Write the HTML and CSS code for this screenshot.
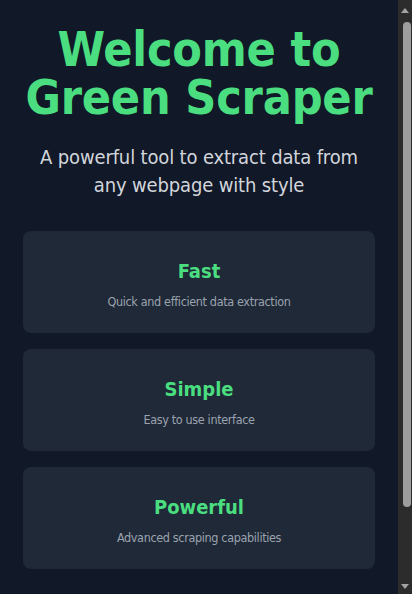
FILE: index.html
```html
<!DOCTYPE html>
<html lang="en">
<head>
<meta charset="utf-8">
<title>Green Scraper</title>
<link rel="stylesheet" href="styles.css">
</head>
<body>
<main class="page">
  <header class="hero">
    <h1 class="title">Welcome to Green Scraper</h1>
    <p class="subtitle">A powerful tool to extract data from any webpage with style</p>
  </header>
  <section class="features">
    <div class="card">
      <h3 class="card-title">Fast</h3>
      <p class="card-text">Quick and efficient data extraction</p>
    </div>
    <div class="card">
      <h3 class="card-title">Simple</h3>
      <p class="card-text">Easy to use interface</p>
    </div>
    <div class="card">
      <h3 class="card-title">Powerful</h3>
      <p class="card-text">Advanced scraping capabilities</p>
    </div>
  </section>
</main>
<div class="scrollbar" aria-hidden="true">
  <span class="arrow-up"></span>
  <span class="thumb"></span>
  <span class="arrow-down"></span>
</div>
</body>
</html>
```
FILE: styles.css
```css
html, body {
  margin: 0;
  padding: 0;
  background: #111827;
}
body {
  font-family: "DejaVu Sans Condensed", "DejaVu Sans", sans-serif;
  padding-right: 14px;
}
.page {
  max-width: 352px;
  margin: 0 auto;
  padding: 25px 0 64px;
}
.hero {
  text-align: center;
}
.title {
  margin: 0;
  font-size: 48px;
  line-height: 48px;
  font-weight: bold;
  color: #4ade80;
  letter-spacing: -0.2px;
}
.subtitle {
  margin: 22px 0 0;
  font-size: 20px;
  line-height: 28px;
  color: #d1d5db;
  letter-spacing: -0.15px;
}
.features {
  margin-top: 32px;
  display: flex;
  flex-direction: column;
  gap: 16px;
}
.card {
  background: #1f2937;
  border-radius: 8px;
  padding: 26px 24px 21px;
  text-align: center;
}
.card-title {
  margin: 0 0 7px;
  font-size: 20px;
  line-height: 28px;
  font-weight: bold;
  color: #4ade80;
}
.card-text {
  margin: 0;
  font-size: 12.5px;
  line-height: 20px;
  color: #9ca3af;
  letter-spacing: -0.35px;
}
.scrollbar {
  position: fixed;
  top: 0;
  right: 0;
  width: 14px;
  height: 100%;
  background: #2c2c2c;
}
.arrow-up,
.arrow-down {
  position: absolute;
  left: 3px;
  width: 0;
  height: 0;
  border-left: 4px solid transparent;
  border-right: 4px solid transparent;
}
.arrow-up {
  top: 8px;
  border-bottom: 5px solid #a3a3a3;
}
.arrow-down {
  bottom: 5px;
  border-top: 5px solid #a3a3a3;
}
.thumb {
  position: absolute;
  top: 22px;
  left: 5px;
  width: 8px;
  height: 485px;
  border-radius: 4px;
  background: #9e9e9e;
}
```
